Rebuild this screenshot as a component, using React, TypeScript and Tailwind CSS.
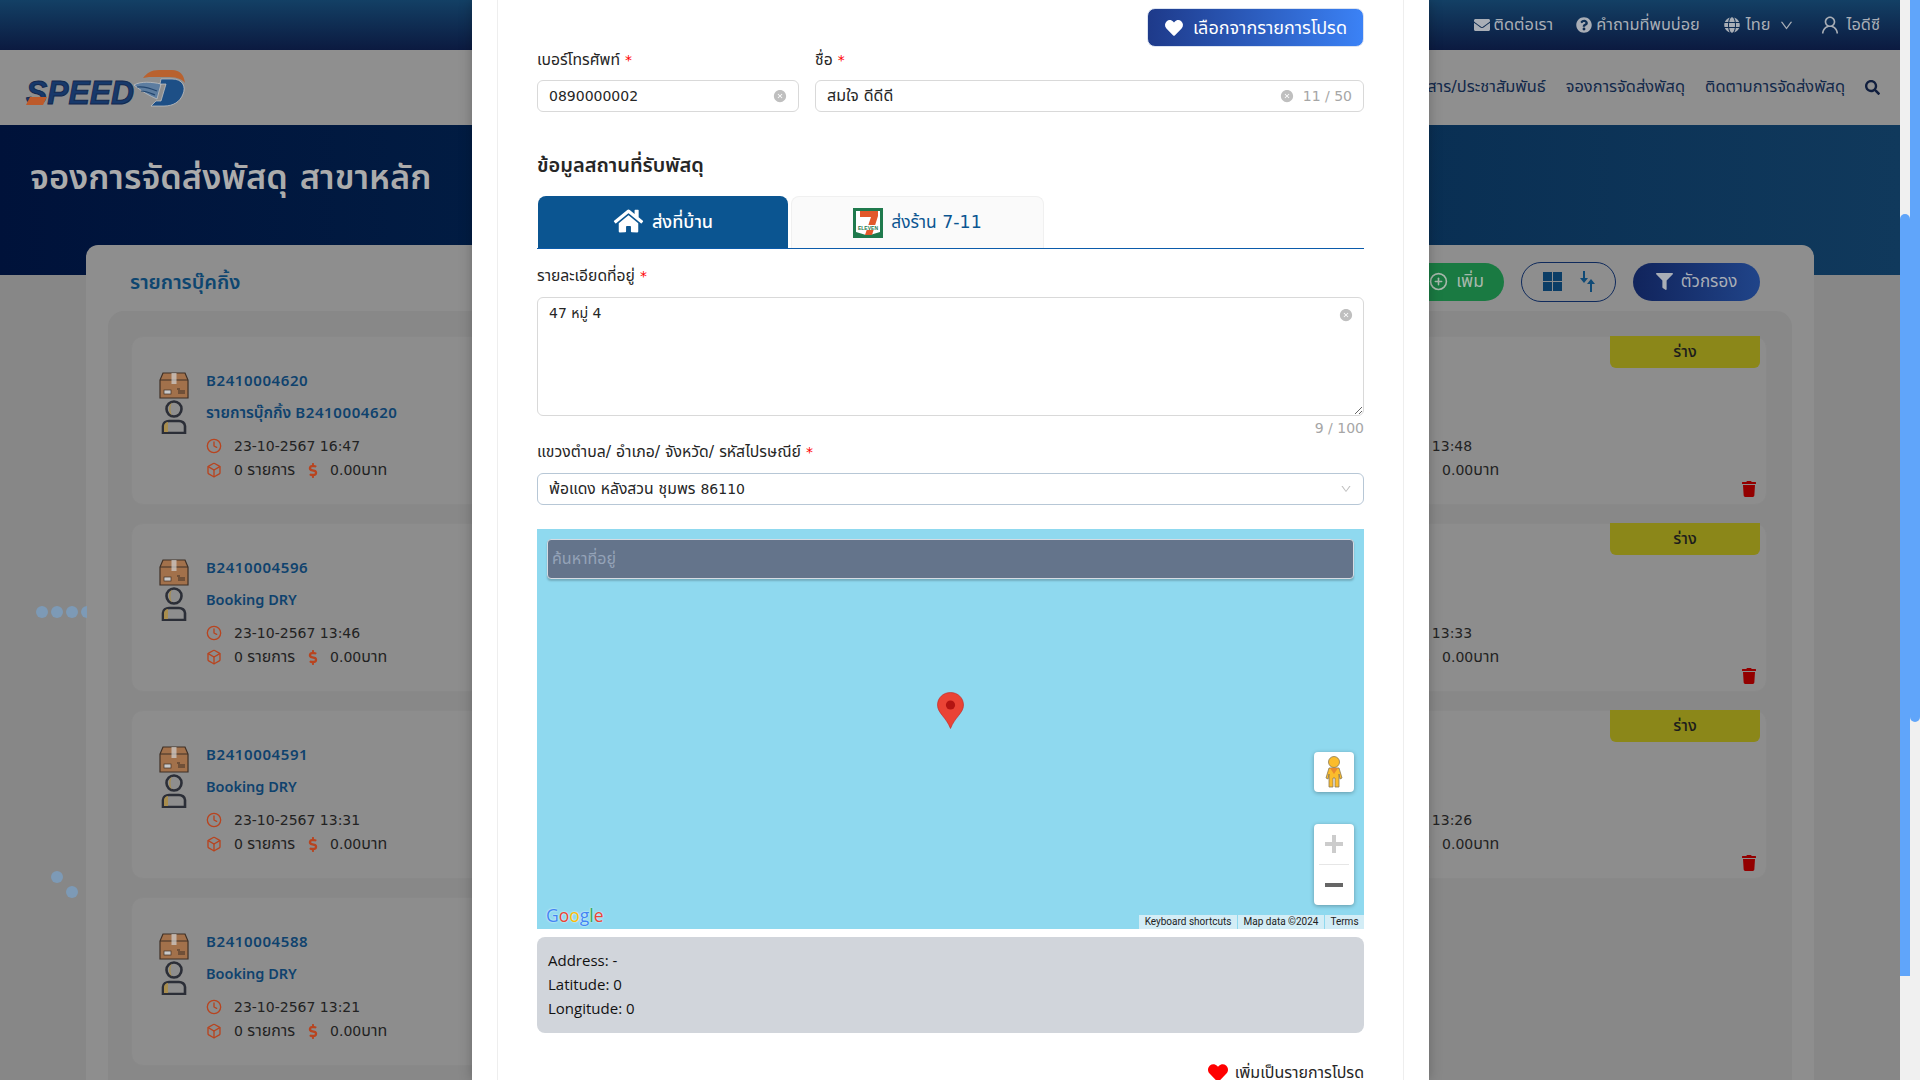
import React from 'react';
import { AiFillCloseCircle, AiOutlineDown, AiOutlineUser } from 'react-icons/ai';
import { FaDollarSign, FaEnvelope, FaFilter, FaGlobe, FaHeart, FaHome, FaQuestionCircle, FaSearch, FaTrash } from 'react-icons/fa';
import { FiBox, FiClock, FiPlusCircle } from 'react-icons/fi';

// the page behind the modal is dimmed, its colours below are the dimmed ones
const rows = [
  {
    id: 'B2410004620',
    title: (
      <>
        <span className="text-[15.5px]">รายการบุ๊กกิ้ง </span>
        <span className="text-[15px] tracking-[0.6px]">B2410004620</span>
      </>
    ),
    time: '16:47',
    right: '13:48',
  },
  { id: 'B2410004596', title: 'Booking DRY', time: '13:46', right: '13:33' },
  { id: 'B2410004591', title: 'Booking DRY', time: '13:31', right: '13:26' },
  { id: 'B2410004588', title: 'Booking DRY', time: '13:21', right: '' },
];

const Logo = () => (
  <svg width="160" height="40" viewBox="0 0 160 40" className="block overflow-visible">
    <text x="1" y="36" fontFamily="'Liberation Sans'" fontStyle="italic" fontWeight="700" fontSize="34" textLength="108" lengthAdjust="spacingAndGlyphs" fill="#17396b" stroke="#12284f" strokeWidth="1">
      SPEED
    </text>
    <path d="M1 37 L5 29 H22 L18 37 Z" fill="#bd5a2b" />
    <path d="M109 17 C116 13 127 14 136 16 L132 31 C125 28 116 23 109 17 Z" fill="#5d7da0" stroke="#c8c8c8" strokeWidth="0.7" />
    <path d="M112 19 C119 18 125 20 132 23 M116 23 C121 23 125 25 130 27" stroke="#23466f" strokeWidth="1.2" fill="none" />
    <path d="M136 11 H147 C158 11 161 19 158 26 C155 34 148 38 139 38 H126 L131 33 H136 L141 16 H135 Z" fill="#1d4f86" stroke="#c8c8c8" strokeWidth="0.7" />
    <path d="M118 10 C122 5 126 2 134 2 H147 C155 2 159 7 160 15 C156 10 150 9 142 9 H124 Z" fill="#b9622f" />
  </svg>
);

const ParcelPerson = () => (
  <svg width="30" height="62" viewBox="0 0 30 62" className="block">
    <path d="M4 1 H26 L29 8 V26 H1 V8 Z" fill="#a2714b" stroke="#3f3026" strokeWidth="1.2" />
    <path d="M1 8 H29" stroke="#3f3026" strokeWidth="1" />
    <rect x="12.5" y="1" width="5" height="11" fill="#d2d2d2" opacity="0.7" />
    <rect x="5" y="18" width="7" height="4" fill="#c9c9c9" stroke="#3f3026" strokeWidth="0.7" />
    <path d="M18 17 H21 M19 19 H26 M19 21 H26" stroke="#3f3026" strokeWidth="1" />
    <circle cx="15" cy="37" r="7.5" fill="#8e8e8e" stroke="#2b2e37" strokeWidth="2.6" />
    <path d="M13 30.5 C9 33 9 41 13 43.5 C11 40 11 34 13 30.5 Z" fill="#a88d4d" />
    <path d="M4 61 V54 C4 51 7 49 10 49 H20 C23 49 26 51 26 54 V61 Z" fill="#8e8e8e" stroke="#2b2e37" strokeWidth="2.6" />
    <path d="M5 60 V54 C5 52 7 50 9 50 V60 Z" fill="#a88d4d" />
  </svg>
);

const SevenEleven = () => (
  <svg width="30" height="30" viewBox="0 0 30 30" className="block">
    <rect width="30" height="30" fill="#1f7a4d" />
    <path d="M3 3 H27 V24 L17 27 H13 L3 24 Z" fill="#ffffff" />
    <path d="M7 3 H25 V8 L19 27 H12 L18 9 H7 Z" fill="#e2582a" />
    <rect x="4" y="17" width="22" height="5" fill="#ffffff" />
    <text x="15" y="21.5" textAnchor="middle" fontSize="5" fontWeight="700" fontFamily="'Liberation Sans'" fill="#1f7a4d">ELEVEN</text>
  </svg>
);

const Pegman = () => (
  <svg width="18" height="32" viewBox="0 0 18 32">
    <circle cx="9" cy="6" r="5.5" fill="#fbbc2c" stroke="#8a7a55" strokeWidth="0.8" />
    <path d="M4 12 H14 L17 22 L15 23 L14 18 V31 H10 V22 H8 V31 H4 V18 L3 23 L1 22 Z" fill="#fbbc2c" stroke="#8a7a55" strokeWidth="0.8" />
    <path d="M5 12 H13 L9 18 Z" fill="#ea8a2e" />
  </svg>
);

const BookingCard = ({ id, title, time }: { id: string; title: React.ReactNode; time: string }) => (
  <div className="relative h-[169px] rounded-xl border border-[#898989] bg-[#8d8d8d] pl-[27px] pt-[35px]">
    <div className="flex gap-[17px]">
      <ParcelPerson />
      <div className="-mt-[4px] flex flex-col text-[#0f426d]">
        <div className="h-[24px] font-['Noto_Sans','Noto_Sans_Thai'] text-[15px] font-semibold leading-[24px] tracking-[0.6px]">{id}</div>
        <div className="mt-[8px] h-[24px] font-['Noto_Sans','Noto_Sans_Thai'] text-[14.5px] font-semibold leading-[24px]">{title}</div>
        <div className="mt-[10px] flex h-[24px] items-center text-[14px] text-[#222222]">
          <FiClock className="mr-[12px] h-[16px] w-[16px] text-[#b8441f]" />
          <span>23-10-2567 {time}</span>
        </div>
        <div className="flex h-[24px] items-center text-[14px] text-[#222222]">
          <FiBox className="mr-[12px] h-[16px] w-[16px] text-[#b8441f]" />
          <span>0 <span className="text-[16px]">รายการ</span></span>
          <FaDollarSign className="ml-[13px] mr-[12px] h-[15px] w-[10px] text-[#b8441f]" />
          <span>0.00<span className="text-[16px]">บาท</span></span>
        </div>
      </div>
    </div>
    <div className="absolute -top-px right-[6px] flex h-[32px] w-[150px] items-center justify-center rounded-b-md bg-[#8b8719] text-[16px] font-medium text-[#1c1c1c]">ร่าง</div>
    <FaTrash className="absolute bottom-[7px] right-[10px] h-[16px] w-[14px] text-[#930000]" />
  </div>
);

const Req = () => <span className="ml-[5px] text-[14px] text-[#ff0000]">*</span>;

const Clear = ({ className = '' }: { className?: string }) => <AiFillCloseCircle className={`h-[14px] w-[14px] shrink-0 text-[#bfbfbf] ${className}`} />;

export default function App() {
  return (
    <div className="flex h-screen w-full overflow-hidden bg-[#878787] font-['DejaVu_Sans','Noto_Sans_Thai',sans-serif]">
      <div className="relative h-full w-[1900px] shrink-0 overflow-hidden">
        <div className="flex h-[50px] items-center justify-end bg-gradient-to-b from-[#134065] to-[#0b1a40] pr-[20px] text-[16.4px] text-[#a9aeb6]">
          <FaEnvelope className="mr-[4px] h-[16px] w-[16px]" />
          <span>ติดต่อเรา</span>
          <FaQuestionCircle className="ml-[23px] mr-[4px] h-[16px] w-[16px]" />
          <span>คำถามที่พบบ่อย</span>
          <FaGlobe className="ml-[24px] mr-[6px] h-[16px] w-[16px]" />
          <span>ไทย</span>
          <AiOutlineDown className="ml-[8px] h-[15px] w-[15px]" />
          <AiOutlineUser className="ml-[25px] mr-[6px] h-[22px] w-[22px]" />
          <span>ไอดีซี</span>
        </div>

        <div className="flex h-[75px] items-center justify-between bg-[#8f8f8f] pl-[25px] pr-[20px] text-[16.4px] text-[#12284a]">
          <Logo />
          <div className="flex items-center gap-[20px]">
            <span>ข่าวสาร/ประชาสัมพันธ์</span>
            <span>จองการจัดส่งพัสดุ</span>
            <span>ติดตามการจัดส่งพัสดุ</span>
            <FaSearch className="h-[15px] w-[15px] text-[#101e3e]" />
          </div>
        </div>

        <div className="h-[150px] bg-gradient-to-r from-[#00123a] to-[#10395c] pl-[30px] pt-[28px]">
          <h1 className="text-[34.4px] font-semibold leading-[48px] text-[#acacac]">จองการจัดส่งพัสดุ สาขาหลัก</h1>
        </div>

        <div className="relative mx-[86px] -mt-[30px] rounded-t-xl bg-[#8e8e8e]">
          <div className="flex h-[66px] items-center justify-between pl-[44px] pr-[54px] pt-[7px]">
            <h2 className="text-[20px] font-semibold text-[#0e4670]">รายการบุ๊คกิ้ง</h2>
            <div className="flex items-center">
              <button className="flex h-[38px] items-center gap-[8px] rounded-full bg-[#1a7a42] pl-[20px] pr-[20px] text-[17.5px] text-[#a8b8ac]">
                <FiPlusCircle className="h-[19px] w-[19px]" />
                เพิ่ม
              </button>
              <div className="ml-[17px] flex h-[40px] w-[95px] items-center justify-center gap-[18px] rounded-full border border-[#0f2a5c]">
                <svg width="19" height="19" viewBox="0 0 19 19" fill="#0b3d66">
                  <rect width="9" height="9" />
                  <rect x="10" width="9" height="9" />
                  <rect y="10" width="9" height="9" />
                  <rect x="10" y="10" width="9" height="9" />
                </svg>
                <svg width="15" height="22" viewBox="0 0 15 22" className="text-[#0f4a76]" fill="currentColor">
                  <path d="M3 0 H5 V7 H8 L4 12 L0 7 H3 Z" />
                  <path d="M10 21 H12 V13 H15 L11 8 L7 13 H10 Z" />
                </svg>
              </div>
              <button className="ml-[17px] flex h-[38px] w-[127px] items-center justify-center gap-[8px] rounded-full bg-gradient-to-r from-[#11245c] to-[#204489] text-[17px] text-[#a9aeb6]">
                <FaFilter className="h-[17px] w-[17px]" />
                ตัวกรอง
              </button>
            </div>
          </div>
          <div className="mx-[22px] rounded-t-2xl bg-[#888888] pb-[60px] pl-[23px] pr-[25px] pt-[25px]">
            <div className="grid grid-cols-3 gap-x-[32px] gap-y-[18px]">
              {rows.map((r) => (
                <React.Fragment key={r.id}>
                  <BookingCard id={r.id} title={r.title} time={r.time} />
                  <div />
                  {r.right ? <BookingCard id="" title="" time={r.right} /> : <div />}
                </React.Fragment>
              ))}
            </div>
          </div>
        </div>

        {/* loader dots left of the modal */}
        <div className="absolute left-[36px] top-[606px] flex gap-[3px]">
          <span className="h-[12px] w-[12px] rounded-full bg-[#7d9ab6]" />
          <span className="h-[12px] w-[12px] rounded-full bg-[#7d9ab6]" />
          <span className="h-[12px] w-[12px] rounded-full bg-[#7d9ab6]" />
          <span className="h-[12px] w-[6px] rounded-l-full bg-[#7d9ab6]" />
        </div>
        <span className="absolute left-[51px] top-[871px] h-[12px] w-[12px] rounded-full bg-[#7d9ab6]" />
        <span className="absolute left-[66px] top-[886px] h-[12px] w-[12px] rounded-full bg-[#7d9ab6]" />

        {/* modal */}
        <div className="absolute inset-y-0 left-[472px] w-[957px] bg-white px-[25px] shadow-[0_0_12px_rgba(0,0,0,0.25)]">
          <div className="h-full border-x border-[#eeeeee] px-[39px] pt-[8px] text-[14px] text-[#262626]">
            <div className="flex justify-end">
              <button className="flex h-[39px] w-[217px] items-center justify-center gap-[9px] rounded-lg border border-[#dbe3f1] bg-gradient-to-r from-[#1e3a8a] to-[#3b82f6] text-[18px] text-white">
                <FaHeart className="h-[18px] w-[20px]" />
                เลือกจากรายการโปรด
              </button>
            </div>

            <div className="flex gap-[16px]">
              <div className="w-[262px]">
                <div className="mb-[8px] h-[25px] text-[15.7px] leading-[25px]">เบอร์โทรศัพท์<Req /></div>
                <div className="flex h-[32px] items-center rounded-md border border-[#d9d9d9] pl-[11px] pr-[11px]">
                  <input readOnly value="0890000002" className="min-w-0 flex-1 outline-none" />
                  <Clear />
                </div>
              </div>
              <div className="flex-1">
                <div className="mb-[8px] h-[25px] text-[15.7px] leading-[25px]">ชื่อ<Req /></div>
                <div className="flex h-[32px] items-center rounded-md border border-[#d9d9d9] pl-[11px] pr-[11px]">
                  <input readOnly value="สมใจ ดีดีดี" className="min-w-0 flex-1 text-[16px] outline-none" />
                  <Clear />
                  <span className="ml-[9px] text-[#a6a6a6]">11 / 50</span>
                </div>
              </div>
            </div>

            <h3 className="mb-[17px] mt-[39px] h-[28px] text-[20px] font-semibold leading-[28px]">ข้อมูลสถานที่รับพัสดุ</h3>

            <div className="flex h-[53px] gap-[3px] border-b border-[#0b5bab] pl-[1px]">
              <div className="flex h-[52px] w-[250px] items-center justify-center gap-[8px] rounded-t-lg bg-[#0b5591] pb-[2px] text-[18px] font-medium text-white">
                <FaHome className="h-[26px] w-[31px]" />
                ส่งที่บ้าน
              </div>
              <div className="flex h-[52px] w-[253px] items-center justify-center gap-[8px] rounded-t-lg border border-b-0 border-[#f0f0f0] bg-[#fafafa] text-[17.4px] text-[#0b5591]">
                <SevenEleven />
                ส่งร้าน 7-11
              </div>
            </div>

            <div className="mb-[10px] mt-[16px] h-[22px] text-[15.7px] leading-[22px]">รายละเอียดที่อยู่<Req /></div>
            <div className="relative h-[119px]">
              <textarea readOnly value="47 หมู่ 4" className="block h-full w-full rounded-md border border-[#d9d9d9] px-[11px] py-[4px] leading-[22px] outline-none" />
              <Clear className="absolute right-[11px] top-[11px]" />
            </div>
            <div className="h-[25px] text-right leading-[24px] text-[#a6a6a6]">9 / 100</div>

            <div className="mb-[10px] h-[22px] text-[15.8px] leading-[22px]">แขวงตำบล/ อำเภอ/ จังหวัด/ รหัสไปรษณีย์<Req /></div>
            <div className="flex h-[32px] items-center justify-between rounded-md border border-[#b7c7d6] pl-[11px] pr-[11px]">
              <span><span className="text-[15.7px]">พ้อแดง หลังสวน ชุมพร </span>86110</span>
              <AiOutlineDown className="h-[12px] w-[12px] text-[#bfbfbf]" />
            </div>

            <div className="relative mt-[24px] h-[400px] bg-[#8fd9ef]">
              <div className="absolute inset-x-[10px] top-[10px] flex h-[40px] items-center rounded-sm border border-[#d5dbe2] bg-[#64748b] pl-[4px] text-[16px] text-[#94a3b8] shadow-[0_2px_2px_rgba(0,0,0,0.2)]">
                ค้นหาที่อยู่
              </div>
              <svg width="27" height="37" viewBox="0 0 27 37" className="absolute left-[400px] top-[163px]">
                <path d="M13.5 0.5 C6 0.5 0.5 6 0.5 13 C0.5 21 9 25 13.5 36.5 C18 25 26.5 21 26.5 13 C26.5 6 21 0.5 13.5 0.5 Z" fill="#ea4335" stroke="#c5221f" strokeWidth="0.6" />
                <circle cx="13.5" cy="13" r="4.6" fill="#b31412" />
              </svg>
              <div className="absolute left-[777px] top-[223px] flex h-[40px] w-[40px] items-center justify-center rounded-sm bg-white shadow-[0_1px_4px_rgba(0,0,0,0.3)]">
                <Pegman />
              </div>
              <div className="absolute left-[777px] top-[295px] flex h-[81px] w-[40px] flex-col items-center rounded-sm bg-white shadow-[0_1px_4px_rgba(0,0,0,0.3)]">
                <div className="flex h-[40px] items-center justify-center">
                  <svg width="18" height="18" viewBox="0 0 18 18"><path d="M7 0 H11 V7 H18 V11 H11 V18 H7 V11 H0 V7 H7 Z" fill="#cccccc" /></svg>
                </div>
                <div className="h-px w-[30px] bg-[#e6e6e6]" />
                <div className="flex h-[40px] items-center justify-center">
                  <div className="h-[4px] w-[18px] bg-[#666666]" />
                </div>
              </div>
              <div className="absolute bottom-[4px] left-[9px] font-['Open_Sans'] text-[17.5px] font-medium leading-[20px] [text-shadow:0_0_2px_#ffffff]">
                <span className="text-[#4285f4]">G</span>
                <span className="text-[#ea4335]">o</span>
                <span className="text-[#fbbc05]">o</span>
                <span className="text-[#4285f4]">g</span>
                <span className="text-[#34a853]">l</span>
                <span className="text-[#ea4335]">e</span>
              </div>
              <div className="absolute bottom-0 right-0 flex h-[14px] gap-px font-['Roboto'] text-[10px] leading-[14px] text-[#222222]">
                <span className="w-[98px] bg-[#d3edf6] text-center">Keyboard shortcuts</span>
                <span className="w-[86px] bg-[#d3edf6] text-center">Map data ©2024</span>
                <span className="w-[39px] bg-[#d3edf6] text-center">Terms</span>
              </div>
            </div>

            <div className="mt-[8px] h-[96px] rounded-lg bg-[#d1d5db] px-[11px] py-[11px] font-['Open_Sans'] text-[15px] leading-[24px] text-[#111111]">
              <div>Address: -</div>
              <div>Latitude: 0</div>
              <div>Longitude: 0</div>
            </div>

            <div className="mt-[28px] flex items-center justify-end gap-[7px] text-[16px]">
              <FaHeart className="h-[20px] w-[20px] text-[#ff0000]" />
              เพิ่มเป็นรายการโปรด
            </div>
          </div>
        </div>
      </div>

      {/* the two scrollbars, the modal's and the page's */}
      <div className="h-full w-[10px] bg-[#f0f0f0] pt-[214px]">
        <div className="h-[762px] rounded-t-full bg-[#60a5fa]" />
      </div>
      <div className="h-full w-[10px] bg-[#f0f0f0]">
        <div className="h-[722px] rounded-b-full bg-[#60a5fa]" />
      </div>
    </div>
  );
}
